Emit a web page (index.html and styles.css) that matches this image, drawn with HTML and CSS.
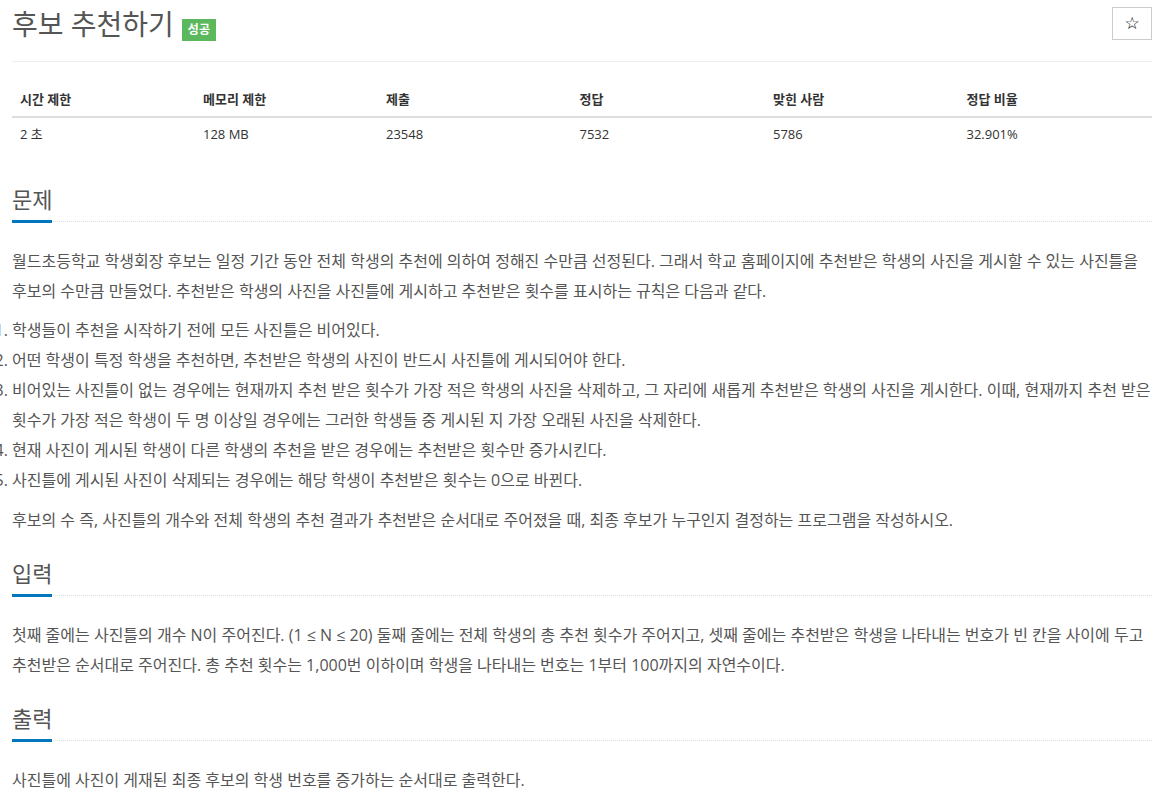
FILE: index.html
```html
<!DOCTYPE html>
<html lang="ko">
<head>
<meta charset="utf-8">
<title>후보 추천하기</title>
<link rel="stylesheet" href="styles.css">
</head>
<body>
<div class="container">
  <div class="page-header">
    <h1 class="title">후보 추천하기</h1>
    <span class="label-success">성공</span>
    <button class="star-btn" type="button">☆</button>
  </div>

  <table class="info-table">
    <thead>
      <tr>
        <th class="w16">시간 제한</th>
        <th class="w16">메모리 제한</th>
        <th class="w17">제출</th>
        <th class="w17">정답</th>
        <th class="w17">맞힌 사람</th>
        <th class="w17">정답 비율</th>
      </tr>
    </thead>
    <tbody>
      <tr>
        <td>2 초</td>
        <td>128 MB</td>
        <td>23548</td>
        <td>7532</td>
        <td>5786</td>
        <td>32.901%</td>
      </tr>
    </tbody>
  </table>

  <section class="section first">
    <div class="headline"><h2>문제</h2></div>
    <div class="text">
      <p>월드초등학교 학생회장 후보는 일정 기간 동안 전체 학생의 추천에 의하여 정해진 수만큼 선정된다. 그래서 학교 홈페이지에 추천받은 학생의 사진을 게시할 수 있는 사진틀을 후보의 수만큼 만들었다. 추천받은 학생의 사진을 사진틀에 게시하고 추천받은 횟수를 표시하는 규칙은 다음과 같다.</p>
      <ol>
        <li>학생들이 추천을 시작하기 전에 모든 사진틀은 비어있다.</li>
        <li>어떤 학생이 특정 학생을 추천하면, 추천받은 학생의 사진이 반드시 사진틀에 게시되어야 한다.</li>
        <li>비어있는 사진틀이 없는 경우에는 현재까지 추천 받은 횟수가 가장 적은 학생의 사진을 삭제하고, 그 자리에 새롭게 추천받은 학생의 사진을 게시한다. 이때, 현재까지 추천 받은 횟수가 가장 적은 학생이 두 명 이상일 경우에는 그러한 학생들 중 게시된 지 가장 오래된 사진을 삭제한다.</li>
        <li>현재 사진이 게시된 학생이 다른 학생의 추천을 받은 경우에는 추천받은 횟수만 증가시킨다.</li>
        <li>사진틀에 게시된 사진이 삭제되는 경우에는 해당 학생이 추천받은 횟수는 0으로 바뀐다.</li>
      </ol>
      <p>후보의 수 즉, 사진틀의 개수와 전체 학생의 추천 결과가 추천받은 순서대로 주어졌을 때, 최종 후보가 누구인지 결정하는 프로그램을 작성하시오.</p>
    </div>
  </section>

  <section class="section">
    <div class="headline"><h2>입력</h2></div>
    <div class="text">
      <p>첫째 줄에는 사진틀의 개수 N이 주어진다. (1 ≤ N ≤ 20) 둘째 줄에는 전체 학생의 총 추천 횟수가 주어지고, 셋째 줄에는 추천받은 학생을 나타내는 번호가 빈 칸을 사이에 두고 추천받은 순서대로 주어진다. 총 추천 횟수는 1,000번 이하이며 학생을 나타내는 번호는 1부터 100까지의 자연수이다.</p>
    </div>
  </section>

  <section class="section">
    <div class="headline"><h2>출력</h2></div>
    <div class="text">
      <p>사진틀에 사진이 게재된 최종 후보의 학생 번호를 증가하는 순서대로 출력한다.</p>
    </div>
  </section>
</div>
</body>
</html>
```

FILE: styles.css
```css
html, body {
  margin: 0;
  padding: 0;
  background: #fff;
}
body {
  font-family: "Open Sans", "Noto Sans CJK KR", sans-serif;
  color: #555;
  font-size: 14px;
  overflow: hidden;
}
.container {
  padding: 0 16px 0 12px;
}
.page-header {
  display: flex;
  align-items: center;
  padding-top: 6px;
  padding-bottom: 19px;
  border-bottom: 1px solid #eee;
}
.title {
  margin: 0;
  font-size: 28px;
  line-height: 36px;
  font-weight: 400;
  color: #555;
}
.label-success {
  display: inline-block;
  margin-left: 8px;
  margin-top: 12px;
  height: 22px;
  line-height: 22px;
  padding: 0 6px;
  background: #5cb85c;
  color: #fff;
  font-size: 12px;
  font-weight: 700;
}
.star-btn {
  margin-left: auto;
  align-self: flex-start;
  margin-top: 1px;
  width: 40px;
  height: 33px;
  padding: 0;
  background: #fff;
  border: 1px solid #ccc;
  color: #000;
  font-size: 17px;
  font-family: "DejaVu Sans", sans-serif;
  line-height: 31px;
}
.info-table {
  width: 100%;
  margin-top: 20px;
  border-collapse: collapse;
  table-layout: fixed;
  font-size: 13px;
  color: #333;
}
.w16 { width: 16%; }
.w17 { width: 17%; }
.info-table th {
  text-align: left;
  font-weight: 700;
  padding: 8px 8px;
  line-height: 18px;
  border-bottom: 2px solid #ddd;
}
.info-table td {
  padding: 7px 8px 8px;
  line-height: 18px;
}
.section {
  margin-top: 23px;
}
.section.first {
  margin-top: 33px;
}
.headline {
  border-bottom: 1px dotted #ddd;
}
.headline h2 {
  display: inline-block;
  margin: 0 0 -2px;
  padding: 0 0 6px;
  width: 40px;
  font-size: 22px;
  line-height: 30px;
  font-weight: 400;
  color: #555;
  border-bottom: 3px solid #0076c0;
  white-space: nowrap;
}
.text {
  padding-top: 24px;
  font-size: 16px;
  line-height: 30px;
}
.text p {
  margin: 0 0 10px;
}
.text ol {
  margin: 0 0 10px;
  padding: 0;
}
.section.first .text ol {
  margin-top: -1px;
}
```
